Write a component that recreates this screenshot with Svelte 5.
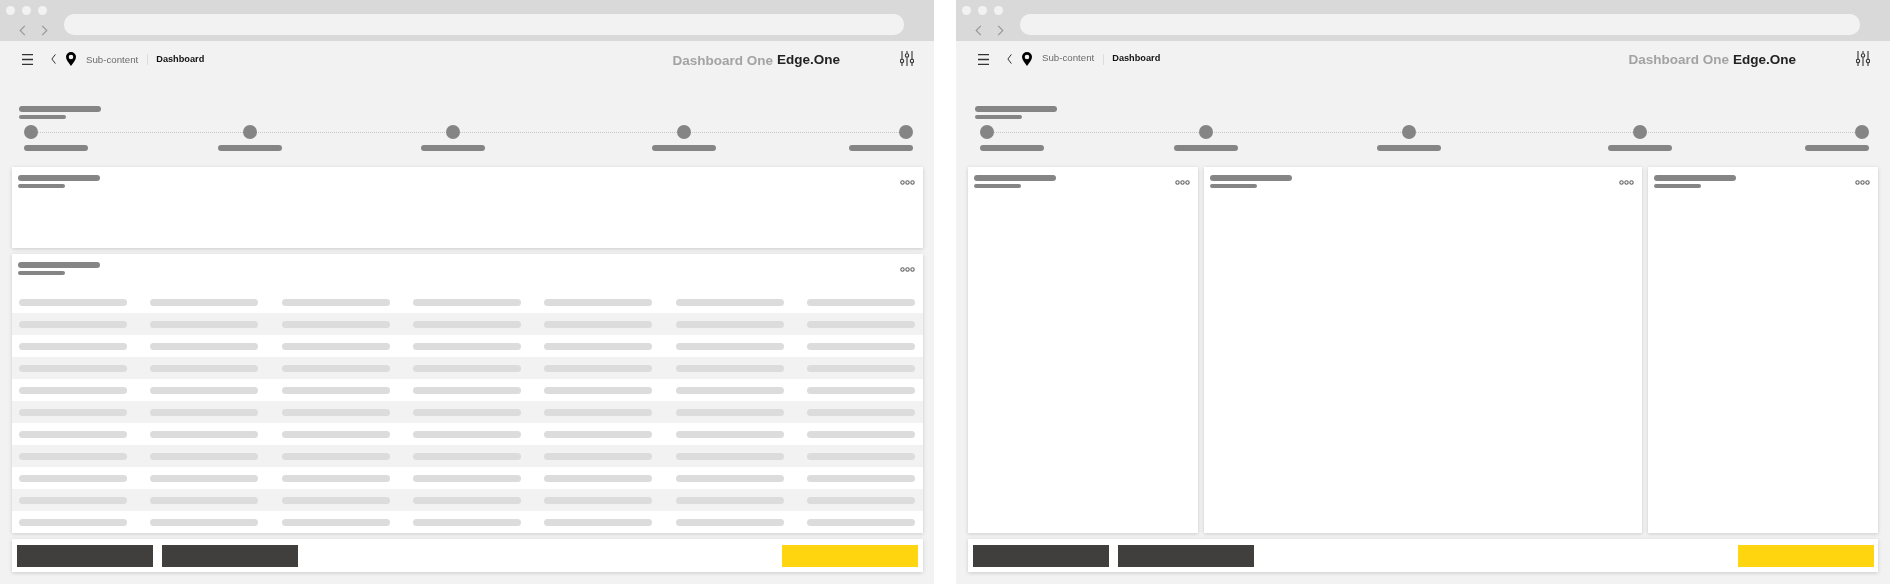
<script>
  const columns = [194, 203, 231, 197, 64];
  const steps = columns.map((_, i) => i);
  const rows = Array.from({ length: 11 }, (_, i) => i);
  const cols = Array.from({ length: 7 }, (_, i) => i);
</script>

{#snippet heading()}
  <div class="heading">
    <span class="bar long"></span>
    <span class="bar short"></span>
  </div>
{/snippet}

{#snippet cardHead()}
  <div class="card-head">
    {@render heading()}
    <svg class="more" width="15" height="5" viewBox="0 0 15 5" aria-hidden="true">
      <circle cx="2.5" cy="2.5" r="1.7" />
      <circle cx="7.5" cy="2.5" r="1.7" />
      <circle cx="12.5" cy="2.5" r="1.7" />
    </svg>
  </div>
{/snippet}

{#snippet chrome()}
  <div class="chrome">
    <div class="traffic">
      <div class="lights">
        <i></i><i></i><i></i>
      </div>
      <div class="arrows">
        <svg width="7" height="11" viewBox="0 0 7 11" aria-hidden="true"><path d="M5.8 .8 1.2 5.5l4.6 4.7" /></svg>
        <svg width="7" height="11" viewBox="0 0 7 11" aria-hidden="true"><path d="M1.2 .8l4.6 4.7-4.6 4.7" /></svg>
      </div>
    </div>
    <div class="url"></div>
  </div>
{/snippet}

{#snippet topbar()}
  <header class="topbar">
    <svg class="burger" width="11" height="11" viewBox="0 0 11 11" aria-hidden="true">
      <path d="M0 .7h11M0 5.5h11M0 10.3h11" />
    </svg>
    <svg class="back" width="5" height="10" viewBox="0 0 5 10" aria-hidden="true"><path d="M4.4 .4.9 5l3.5 4.600" /></svg>
    <svg class="pin" width="10" height="14" viewBox="0 0 10 14" aria-hidden="true">
      <path fill-rule="evenodd" d="M5 0a5 5 0 0 1 5 5c0 3.200-3 6-5 9C3 11 0 8.200 0 5a5 5 0 0 1 5-5Zm0 2.700a2.300 2.300 0 1 0 0 4.600 2.300 2.300 0 0 0 0-4.600Z" />
    </svg>
    <span class="crumb">Sub-content</span>
    <span class="sep"></span>
    <span class="crumb current">Dashboard</span>
    <span class="title">Dashboard One</span>
    <span class="brand">Edge.One</span>
    <svg class="sliders" width="14" height="15" viewBox="0 0 14 15" aria-hidden="true">
      <path d="M2 0v8.200M2 12v3M7 0v2.600M7 6.400V15M12 0v8.200M12 12v3" />
      <circle cx="2" cy="10" r="1.700" />
      <circle cx="7" cy="4.500" r="1.700" />
      <circle cx="12" cy="10" r="1.700" />
    </svg>
  </header>
{/snippet}

{#snippet section()}
  <div class="section">
    {@render heading()}
    <div class="stepper">
      <span class="track"></span>
      {#each steps as step}
        <div class="step" class:first={step === 0} class:last={step === steps.length - 1}>
          <span class="node"></span>
          <span class="bar label"></span>
        </div>
      {/each}
    </div>
  </div>
{/snippet}

{#snippet footer()}
  <footer class="actions">
    <span class="btn dark"></span>
    <span class="btn dark"></span>
    <span class="btn yellow"></span>
  </footer>
{/snippet}

<div class="page">
  <section class="win one">
    {@render chrome()}
    {@render topbar()}
    {@render section()}
    <div class="content">
      <div class="card summary">{@render cardHead()}</div>
      <div class="card table">
        <div class="table-head">{@render cardHead()}</div>
        {#each rows as row}
          <div class="row" class:band={row % 2 === 1}>
            {#each cols as col}
              <span class="cell" data-col={col}></span>
            {/each}
          </div>
        {/each}
      </div>
      {@render footer()}
    </div>
  </section>

  <section class="win two">
    {@render chrome()}
    {@render topbar()}
    {@render section()}
    <div class="content">
      <div class="panels">
        <div class="card">{@render cardHead()}</div>
        <div class="card">{@render cardHead()}</div>
        <div class="card">{@render cardHead()}</div>
      </div>
      {@render footer()}
    </div>
  </section>
</div>

<style>
  :global(body) {
    margin: 0;
    background: #fff;
  }

  .page {
    display: flex;
    justify-content: space-between;
    width: 1890px;
    height: 584px;
    overflow: hidden;
    font-family: "Liberation Sans", Arial, sans-serif;
  }

  .win {
    width: 934px;
    height: 584px;
    background: #f2f2f2;
    filter: blur(0.35px);
  }

  /* browser chrome */
  .chrome {
    display: flex;
    height: 41px;
    background: #d9d9d9;
  }

  .traffic {
    width: 64px;
    flex: none;
  }

  .lights {
    display: flex;
    gap: 7px;
    padding: 6px 0 0 6px;
  }

  .lights i {
    width: 9px;
    height: 9px;
    border-radius: 50%;
    background: #f2f2f2;
  }

  .arrows {
    display: flex;
    gap: 15px;
    padding: 10px 0 0 19px;
  }

  .arrows path {
    fill: none;
    stroke: #999;
    stroke-width: 1.2;
  }

  .url {
    flex: 1;
    height: 21px;
    margin: 14px 30px 0 0;
    border-radius: 10px;
    background: #f2f2f2;
  }

  /* top bar */
  .topbar {
    display: flex;
    align-items: center;
    height: 36px;
    padding-left: 22px;
  }

  .burger path {
    fill: none;
    stroke: #333;
    stroke-width: 1.300;
  }

  .back {
    margin-left: 18px;
  }

  .back path {
    fill: none;
    stroke: #333;
    stroke-width: 1;
  }

  .pin {
    margin-left: 10px;
  }

  .crumb {
    margin-left: 10px;
    font-size: 9.700px;
    color: #6b6b6b;
  }

  .sep {
    width: 1px;
    height: 11px;
    margin-left: 9px;
    background: #dcdcdc;
  }

  .crumb.current {
    margin-left: 8px;
    font-size: 9.200px;
    font-weight: 700;
    color: #111;
  }

  .title,
  .brand {
    font-size: 13.500px;
    font-weight: 700;
    white-space: nowrap;
  }

  .title {
    margin: 3px 0 0 auto;
    color: #a3a3a3;
  }

  .brand {
    width: 63px;
    margin-left: 4px;
    color: #222;
  }

  .sliders {
    margin: -1px 20px 0 60px;
  }

  .sliders path,
  .sliders circle {
    fill: none;
    stroke: #333;
    stroke-width: 1.100;
  }

  .two .crumb {
    margin-top: -3px;
  }

  .two .title {
    margin-top: 0;
  }

  /* section heading and stepper */
  .section {
    padding: 29px 0 0 19px;
  }

  .heading {
    display: flex;
    flex-direction: column;
    gap: 3px;
  }

  .bar {
    display: block;
    border-radius: 3px;
    background: #858585;
  }

  .long {
    width: 82px;
    height: 6px;
  }

  .short {
    width: 47px;
    height: 4px;
  }

  .stepper {
    position: relative;
    display: grid;
    grid-template-columns: 194px 203px 231px 197px 64px;
    margin: 6px 0 0 5px;
  }

  .track {
    position: absolute;
    top: 7px;
    left: 14px;
    width: 861px;
    border-top: 1px dotted #c6c6c6;
  }

  .step {
    position: relative;
    display: flex;
    flex-direction: column;
    align-items: center;
    gap: 6px;
    width: 64px;
  }

  .step.first {
    align-items: flex-start;
  }

  .step.last {
    align-items: flex-end;
  }

  .node {
    width: 14px;
    height: 14px;
    border-radius: 50%;
    background: #858585;
  }

  .label {
    width: 64px;
    height: 6px;
  }

  /* cards */
  .content {
    display: flex;
    flex-direction: column;
    gap: 6px;
    padding: 16px 12px 0;
  }

  .one .content {
    padding-right: 11px;
  }

  .card {
    background: #fff;
    box-shadow: 0 1px 4px rgba(0, 0, 0, 0.16);
  }

  .summary {
    height: 81px;
  }

  .card-head {
    display: flex;
    justify-content: space-between;
    align-items: flex-start;
    padding: 8px 8px 0 5.500px;
  }

  .more {
    margin-top: 4.500px;
  }

  .more circle {
    fill: none;
    stroke: #666;
    stroke-width: 1.100;
  }

  .table-head {
    height: 37px;
  }

  .row {
    display: grid;
    grid-template-columns: repeat(7, 108px);
    justify-content: space-between;
    align-items: center;
    height: 22px;
    padding: 0 8px 0 7px;
  }

  .row.band {
    background: #f2f2f2;
  }

  .cell {
    height: 7px;
    border-radius: 4px;
    background: #dcdcdc;
  }

  .panels {
    display: grid;
    grid-template-columns: 230px 1fr 230px;
    gap: 6px;
    height: 366px;
  }

  /* footer buttons */
  .actions {
    display: flex;
    gap: 9px;
    height: 33px;
    box-sizing: border-box;
    padding: 6px 5px 5px;
    background: #fff;
    box-shadow: 0 1px 4px rgba(0, 0, 0, 0.16);
  }

  .two .actions {
    padding-right: 4px;
  }

  .btn {
    width: 136px;
    height: 22px;
  }

  .dark {
    background: #403f3d;
  }

  .yellow {
    margin-left: auto;
    background: #ffd510;
  }
</style>
